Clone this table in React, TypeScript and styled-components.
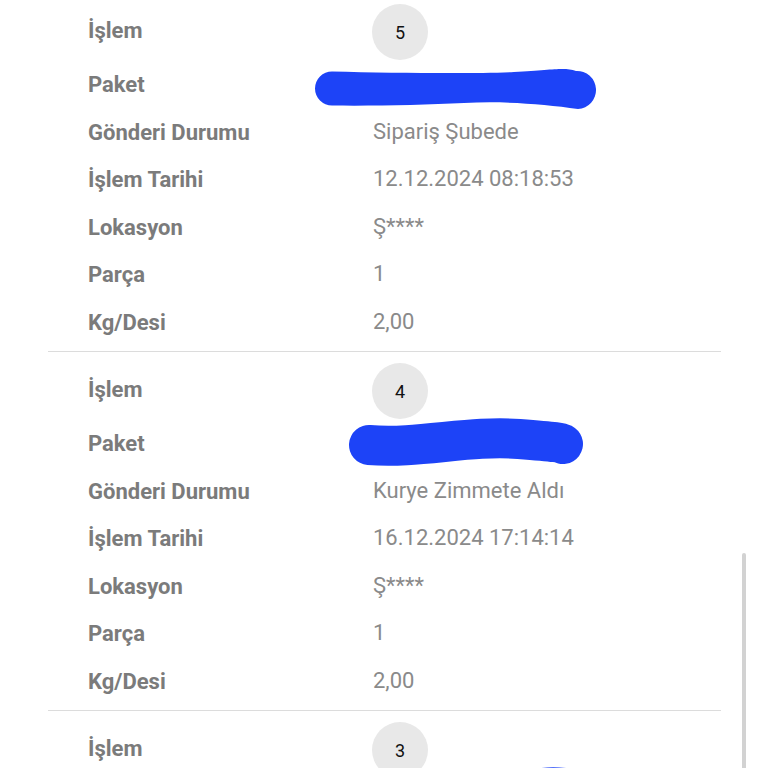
import React from "react";
import styled, { createGlobalStyle } from "styled-components";

const Global = createGlobalStyle`
  html, body { margin: 0; padding: 0; background: #ffffff; overflow: hidden; }
  body { font-family: Roboto, "Noto Sans", "Liberation Sans", sans-serif; }
`;

const Page = styled.div`
  position: relative;
  width: 768px;
  height: 768px;
  overflow: hidden;
  background: #fff;
`;

const List = styled.div`
  margin-top: -7px;
  margin-left: 48px;
  width: 673px;
  display: flex;
  flex-direction: column;
`;

const Block = styled.section<{ $first?: boolean }>`
  display: flex;
  flex-direction: column;
  padding: 11px 0 7px;
  border-top: 1px solid ${(p) => (p.$first ? "transparent" : "#dcdcdc")};
  margin-top: -1px;
`;

const Row = styled.div<{ $tall?: boolean }>`
  display: grid;
  grid-template-columns: 325px 1fr;
  align-items: center;
  height: ${(p) => (p.$tall ? "56px" : "47.5px")};
`;

const Label = styled.div<{ $shift?: number }>`
  padding-left: 40px;
  font-size: 22px;
  font-weight: 700;
  color: #7b7b7b;
  white-space: nowrap;
  transform: translateY(${(p) => p.$shift ?? 1}px);
`;

const Value = styled.div`
  position: relative;
  font-size: 22px;
  font-weight: 400;
  color: #8a8a8a;
  white-space: nowrap;
`;

const Badge = styled.div`
  width: 56px;
  height: 56px;
  margin-left: -1px;
  border-radius: 50%;
  background: #e8e8e8;
  color: #111;
  font-size: 18px;
  display: flex;
  align-items: center;
  justify-content: center;
`;

const Scribble = styled.svg<{ $left: number; $top: number }>`
  position: absolute;
  left: ${(p) => p.$left}px;
  top: ${(p) => p.$top}px;
  overflow: visible;
`;

const ScrollBar = styled.div`
  position: absolute;
  left: 742px;
  top: 553px;
  width: 4px;
  height: 230px;
  border-radius: 2px;
  background: #d2d2d2;
`;

type Mark =
  | { kind: "fill"; d: string }
  | { kind: "stroke"; d: string; w: number };

type Item = {
  n: number;
  status: string;
  date: string;
  partial?: boolean;
  scribble: { left: number; top: number; mark: Mark };
};

const items: Item[] = [
  {
    n: 5,
    status: "Sipariş Şubede",
    date: "12.12.2024 08:18:53",
    scribble: {
      left: -59,
      top: -36,
      mark: {
        kind: "fill",
        d: "M18 23.5 C 80 25, 160 26, 200 24 S 250 19, 262 23 A 19 19 0 0 1 264 61 C 230 56, 190 53, 150 55 S 60 58, 18 57.5 A 17 17 0 0 1 18 23.5 Z",
      },
    },
  },
  {
    n: 4,
    status: "Kurye Zimmete Aldı",
    date: "16.12.2024 17:14:14",
    scribble: {
      left: -24,
      top: -24,
      mark: {
        kind: "stroke",
        w: 40,
        d: "M20 26 C 70 30, 120 16, 170 20 S 210 24, 214 25",
      },
    },
  },
  {
    n: 3,
    status: "",
    date: "",
    partial: true,
    scribble: {
      left: 150,
      top: -36,
      mark: { kind: "stroke", w: 36, d: "M20 20 C 26 19, 34 19, 42 20" },
    },
  },
];

const Redaction: React.FC<{ s: Item["scribble"] }> = ({ s }) => (
  <Scribble $left={s.left} $top={s.top} width="300" height="60" viewBox="0 0 300 60">
    {s.mark.kind === "fill" ? (
      <path d={s.mark.d} fill="#1d43f7" />
    ) : (
      <path
        d={s.mark.d}
        fill="none"
        stroke="#1d43f7"
        strokeWidth={s.mark.w}
        strokeLinecap="round"
        strokeLinejoin="round"
      />
    )}
  </Scribble>
);

const Entry: React.FC<{ item: Item; first?: boolean }> = ({ item, first }) => (
  <Block $first={first}>
    <Row $tall>
      <Label $shift={-2}>İşlem</Label>
      <Value>
        <Badge>{item.n}</Badge>
      </Value>
    </Row>
    <Row>
      <Label>{item.partial ? "" : "Paket"}</Label>
      <Value>
        <Redaction s={item.scribble} />
      </Value>
    </Row>
    {!item.partial && (
      <>
        <Row>
          <Label>Gönderi Durumu</Label>
          <Value>{item.status}</Value>
        </Row>
        <Row>
          <Label>İşlem Tarihi</Label>
          <Value>{item.date}</Value>
        </Row>
        <Row>
          <Label>Lokasyon</Label>
          <Value>Ş****</Value>
        </Row>
        <Row>
          <Label>Parça</Label>
          <Value>1</Value>
        </Row>
        <Row>
          <Label>Kg/Desi</Label>
          <Value>2,00</Value>
        </Row>
      </>
    )}
  </Block>
);

export default function App() {
  return (
    <Page>
      <Global />
      <List>
        {items.map((it, i) => (
          <Entry key={it.n} item={it} first={i === 0} />
        ))}
      </List>
      <ScrollBar />
    </Page>
  );
}
